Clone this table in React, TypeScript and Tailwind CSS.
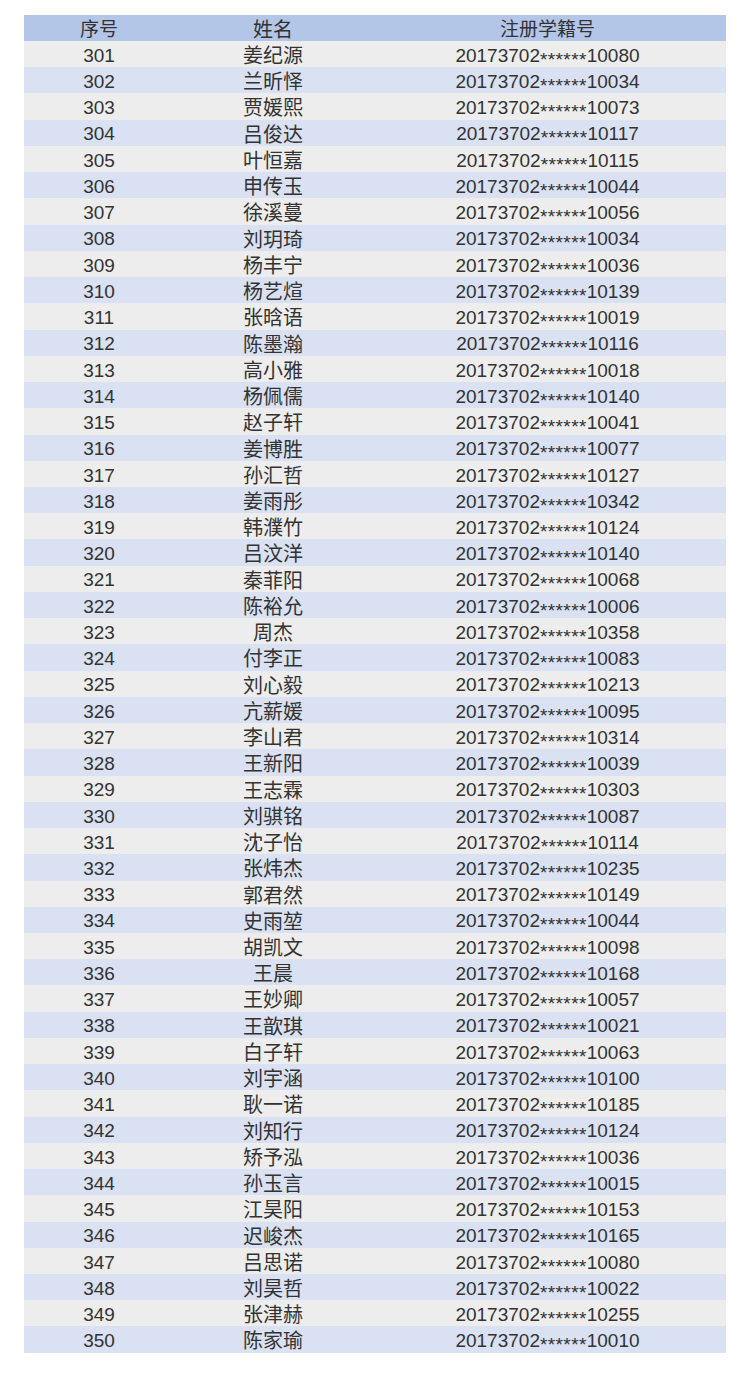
const names = [
  '姜纪源', '兰昕怿', '贾媛熙', '吕俊达', '叶恒嘉', '申传玉', '徐溪蔓', '刘玥琦', '杨丰宁', '杨艺煊',
  '张晗语', '陈墨瀚', '高小雅', '杨佩儒', '赵子轩', '姜博胜', '孙汇哲', '姜雨彤', '韩濮竹', '吕汶洋',
  '秦菲阳', '陈裕允', '周杰', '付李正', '刘心毅', '亢薪媛', '李山君', '王新阳', '王志霖', '刘骐铭',
  '沈子怡', '张炜杰', '郭君然', '史雨堃', '胡凯文', '王晨', '王妙卿', '王歆琪', '白子轩', '刘宇涵',
  '耿一诺', '刘知行', '矫予泓', '孙玉言', '江昊阳', '迟峻杰', '吕思诺', '刘昊哲', '张津赫', '陈家瑜',
];

const tails = [
  '10080', '10034', '10073', '10117', '10115', '10044', '10056', '10034', '10036', '10139',
  '10019', '10116', '10018', '10140', '10041', '10077', '10127', '10342', '10124', '10140',
  '10068', '10006', '10358', '10083', '10213', '10095', '10314', '10039', '10303', '10087',
  '10114', '10235', '10149', '10044', '10098', '10168', '10057', '10021', '10063', '10100',
  '10185', '10124', '10036', '10015', '10153', '10165', '10080', '10022', '10255', '10010',
];

function RegNo({ tail }: { tail: string }) {
  return (
    <span className="whitespace-nowrap">
      20173702
      <span className="inline-block translate-y-[4px] tracking-[0.4px]">******</span>
      {tail}
    </span>
  );
}

export default function App() {
  return (
    <div
      className="bg-white w-[750px] h-[1377px] pt-[15px] text-[19px] text-[#333333]"
      style={{ fontFamily: '"Liberation Sans", "Noto Sans CJK SC", sans-serif' }}
    >
      <div className="ml-[24px] w-[702px]">
        <div className="grid grid-cols-[150px_198px_351px_1fr] h-[26px] bg-[#b4c6e7] items-center text-center">
          <div>序号</div>
          <div className="text-[20px]">姓名</div>
          <div>注册学籍号</div>
          <div />
        </div>
        {names.map((name, i) => (
          <div
            key={i}
            className={
              'grid grid-cols-[150px_198px_351px_1fr] h-[26.24px] items-center text-center ' +
              (i % 2 === 0 ? 'bg-[#ededed]' : 'bg-[#d9e1f2]')
            }
          >
            <div>{301 + i}</div>
            <div className="text-[20px]">{name}</div>
            <div>
              <RegNo tail={tails[i]} />
            </div>
            <div />
          </div>
        ))}
      </div>
    </div>
  );
}
